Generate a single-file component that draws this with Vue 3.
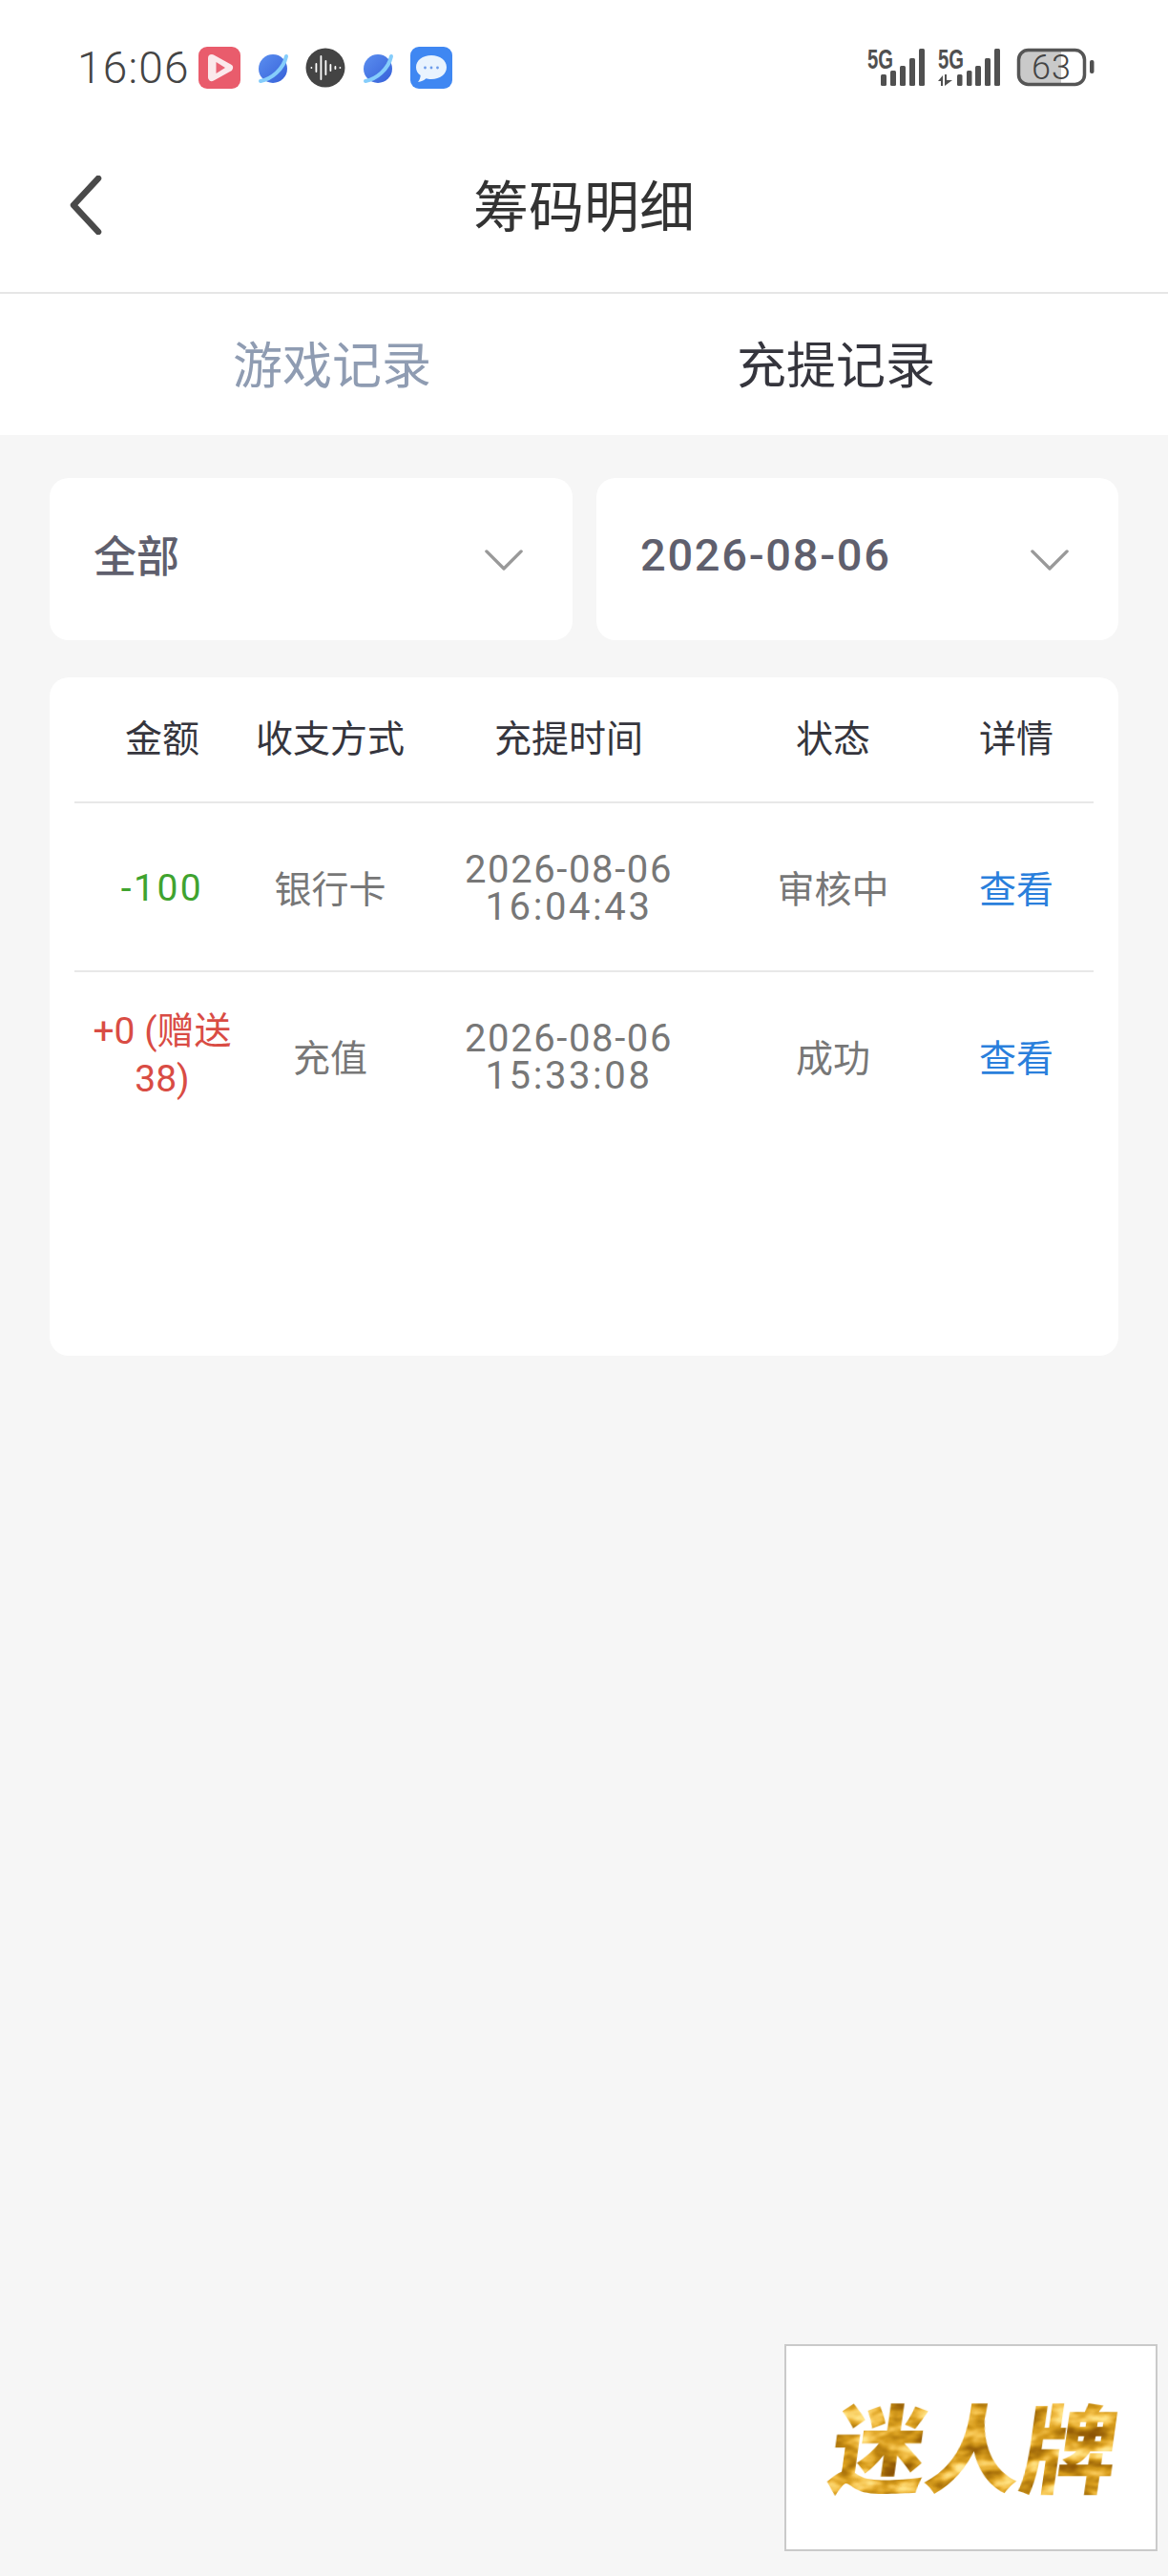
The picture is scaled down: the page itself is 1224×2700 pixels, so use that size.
<script setup>
const columns = ['金额', '收支方式', '充提时间', '状态', '详情']

const records = [
  { amount: '-100', type: 'out', method: '银行卡', date: '2026-08-06', time: '16:04:43', status: '审核中' },
  { amount: '+0 (赠送38)', type: 'in', method: '充值', date: '2026-08-06', time: '15:33:08', status: '成功' },
]

const waveBars = [1, 5, 13, 8, 4, 2, 1]
</script>

<template>
  <div class="page">
    <header class="top">
      <div class="status-bar">
        <div class="status-left">
          <span class="clock">16:06</span>
          <svg class="icon-app" viewBox="0 0 44 44">
            <rect width="44" height="44" rx="9" fill="#e95c6c" />
            <path d="M14 12 L32 22 L14 32Z" fill="#fbe9ec" stroke="#fbe9ec" stroke-width="8" stroke-linejoin="round" />
            <path d="M18.5 16 L28 22 L18.5 28Z" fill="#ea6274" />
          </svg>
          <svg class="icon-planet" viewBox="0 0 33 33">
            <defs>
              <linearGradient id="planetFill" x1="0" y1="0" x2="1" y2="1">
                <stop offset="0" stop-color="#5b8ff0" />
                <stop offset="1" stop-color="#3660d8" />
              </linearGradient>
            </defs>
            <circle cx="16" cy="17" r="15" fill="url(#planetFill)" />
            <path d="M3 30 C14 28 27 18 30 4" fill="none" stroke="#85cdfb" stroke-width="4" stroke-linecap="round" />
          </svg>
          <svg class="icon-wave" viewBox="0 0 42 42">
            <circle cx="21" cy="21" r="20.5" fill="#444" />
            <rect v-for="(h, i) in waveBars" :key="i" :x="5.5 + i * 5" :y="21 - h" width="1.8" :height="h * 2" rx="0.9" fill="#fff" />
          </svg>
          <svg class="icon-planet" viewBox="0 0 33 33">
            <circle cx="16" cy="17" r="15" fill="url(#planetFill)" />
            <path d="M3 30 C14 28 27 18 30 4" fill="none" stroke="#85cdfb" stroke-width="4" stroke-linecap="round" />
          </svg>
          <svg class="icon-app" viewBox="0 0 44 44">
            <rect width="44" height="44" rx="9" fill="#3f87f2" />
            <path d="M22 9 C31 9 38 14 38 21.5 C38 29 31 34 22 34 C19.5 34 18 33.7 16.5 33.2 C14 35.5 11.5 36.5 8 37 C9.5 35 10.5 33 10.7 30 C7.5 28 6 25 6 21.5 C6 14 13 9 22 9Z" fill="#e9f3fe" />
            <circle cx="15.5" cy="22" r="1.4" fill="#6c9bea" />
            <circle cx="22" cy="22" r="1.4" fill="#6c9bea" />
            <circle cx="28.5" cy="22" r="1.4" fill="#6c9bea" />
          </svg>
        </div>
        <svg class="signals" viewBox="0 0 238 42">
          <text x="0" y="22" class="net" textLength="27" lengthAdjust="spacingAndGlyphs">5G</text>
          <rect x="14" y="28" width="6" height="12" rx="1.5" />
          <rect x="24" y="24" width="6" height="16" rx="1.5" />
          <rect x="34" y="19" width="6" height="21" rx="1.5" />
          <rect x="44" y="11" width="6" height="29" rx="1.5" />
          <rect x="54" y="1" width="6" height="39" rx="1.5" />
          <text x="74" y="22" class="net" textLength="27" lengthAdjust="spacingAndGlyphs">5G</text>
          <path d="M74 35 L79 29 V40 H77 V35Z M81 28 H83 V34 L89 34 L81 40Z" />
          <rect x="94" y="28" width="5.5" height="12" rx="1.5" />
          <rect x="104" y="24" width="5.5" height="16" rx="1.5" />
          <rect x="113" y="19" width="6" height="21" rx="1.5" />
          <rect x="123" y="11" width="6" height="29" rx="1.5" />
          <rect x="133" y="1" width="6" height="39" rx="1.5" />
          <path d="M165 3 H203 V38 H165 Q159 38 159 32 V9 Q159 3 165 3Z" fill="#c9c9c9" />
          <rect x="158.5" y="2.5" width="69" height="36" rx="10" fill="none" stroke="#555" stroke-width="3.5" />
          <text x="193" y="33" class="level">63</text>
          <rect x="233" y="13" width="4.5" height="14" rx="2" />
        </svg>
      </div>

      <nav class="nav">
        <svg class="back" viewBox="0 0 34 62">
          <path d="M30 3 L4 31 L30 59" fill="none" stroke="#4a4a4a" stroke-width="6.5" stroke-linecap="round" stroke-linejoin="round" />
        </svg>
        <h1 class="title">筹码明细</h1>
      </nav>
    </header>

    <div class="tabs">
      <div class="tab">游戏记录</div>
      <div class="tab active">充提记录</div>
    </div>

    <main class="content">
      <div class="filters">
        <div class="filter">
          <span class="filter-text">全部</span>
          <svg class="arrow" viewBox="0 0 42 24">
            <path d="M2 3 L21 22 L40 3" fill="none" stroke="#999" stroke-width="3.5" stroke-linecap="round" stroke-linejoin="round" />
          </svg>
        </div>
        <div class="filter">
          <span class="filter-text filter-date">2026-08-06</span>
          <svg class="arrow" viewBox="0 0 42 24">
            <path d="M2 3 L21 22 L40 3" fill="none" stroke="#999" stroke-width="3.5" stroke-linecap="round" stroke-linejoin="round" />
          </svg>
        </div>
      </div>

      <section class="table">
        <div class="row head">
          <div v-for="col in columns" :key="col">{{ col }}</div>
        </div>
        <div v-for="item in records" :key="item.time" class="row">
          <div class="amount" :class="item.type">{{ item.amount }}</div>
          <div>{{ item.method }}</div>
          <div class="when">
            <div class="when-date">{{ item.date }}</div>
            <div class="when-time">{{ item.time }}</div>
          </div>
          <div>{{ item.status }}</div>
          <div class="link">查看</div>
        </div>
      </section>
    </main>

    <div class="brand">
      <svg class="brand-art" viewBox="0 0 340 120">
        <defs>
          <filter id="gold" x="0" y="0" width="100%" height="100%" color-interpolation-filters="sRGB">
            <feTurbulence type="fractalNoise" baseFrequency="0.03 0.055" numOctaves="3" seed="11" />
            <feColorMatrix values="1 0 0 0 0  1 0 0 0 0  1 0 0 0 0  0 0 0 0 1" />
            <feComponentTransfer>
              <feFuncR type="table" tableValues="0.55 0.55 0.6 0.72 0.85 0.96 1 1 1" />
              <feFuncG type="table" tableValues="0.33 0.33 0.38 0.5 0.62 0.76 0.88 0.93 0.93" />
              <feFuncB type="table" tableValues="0.02 0.02 0.03 0.06 0.12 0.3 0.5 0.65 0.65" />
            </feComponentTransfer>
            <feComposite in2="SourceAlpha" operator="in" />
          </filter>
        </defs>
        <text class="brand-text" x="169" y="99" transform="skewX(-8) translate(13 0)" filter="url(#gold)">迷人牌</text>
      </svg>
    </div>
  </div>
</template>

<style>
html, body {
  margin: 0;
  background: #f6f6f6;
}
</style>

<style scoped>
.page {
  position: relative;
  width: 1224px;
  height: 2700px;
  overflow: hidden;
  background: #f6f6f6;
  font-family: "Noto Sans CJK SC", Roboto, sans-serif;
}

.top {
  background: #fff;
  border-bottom: 2px solid #e6e6e6;
}

.status-bar {
  height: 124px;
  padding: 49px 77px 0 81px;
  box-sizing: border-box;
  display: flex;
  justify-content: space-between;
  align-items: flex-start;
}

.status-left {
  display: flex;
  align-items: center;
  gap: 17.5px;
  height: 44px;
}

.clock {
  font-family: Roboto, sans-serif;
  font-weight: 300;
  font-size: 46px;
  letter-spacing: 1.2px;
  color: #444;
  margin-right: -8px;
}

.icon-app {
  width: 44px;
  height: 44px;
}

.icon-planet {
  width: 33px;
  height: 33px;
}

.icon-wave {
  width: 42px;
  height: 42px;
}

.signals {
  width: 238px;
  height: 42px;
  margin-top: 1px;
  fill: #505050;
  overflow: visible;
}

.net {
  font-family: "Liberation Sans", sans-serif;
  font-weight: 700;
  font-size: 29px;
}

.level {
  font-family: Roboto, sans-serif;
  font-weight: 300;
  font-size: 36px;
  letter-spacing: 1px;
  fill: #444;
  text-anchor: middle;
}

.nav {
  height: 182px;
  padding-left: 73px;
  position: relative;
  display: flex;
  align-items: center;
}

.back {
  width: 34px;
  height: 62px;
}

.title {
  position: absolute;
  left: 0;
  right: 0;
  margin: 0;
  padding-bottom: 4px;
  text-align: center;
  font-size: 58px;
  font-weight: 400;
  color: #333;
}

.tabs {
  height: 148px;
  padding: 0 84px;
  background: #fff;
  display: grid;
  grid-template-columns: 1fr 1fr;
}

.tab {
  display: flex;
  justify-content: center;
  align-items: center;
  padding-bottom: 6px;
  font-size: 52px;
  color: #8f9cb2;
}

.tab.active {
  color: #35353d;
}

.content {
  padding: 45px 52px 0;
}

.filters {
  display: grid;
  grid-template-columns: 548px 547px;
  gap: 25px;
}

.filter {
  height: 170px;
  padding: 0 52px 0 46px;
  box-sizing: border-box;
  background: #fff;
  border-radius: 20px;
  display: flex;
  justify-content: space-between;
  align-items: center;
  font-size: 45px;
  font-weight: 500;
  color: #5f5f6d;
}

.filter-text {
  margin-bottom: 12px;
}

.filter-date {
  margin-bottom: 9px;
  font-family: Roboto, sans-serif;
  letter-spacing: 1.7px;
  font-size: 47px;
}

.arrow {
  width: 40px;
  height: 23px;
}

.table {
  margin-top: 39px;
  height: 711px;
  padding: 0 26px;
  box-sizing: border-box;
  background: #fff;
  border-radius: 20px;
}

.row {
  display: grid;
  grid-template-columns: 184px 168px 332px 222px 162px;
  align-items: center;
  text-align: center;
  height: 177px;
  box-sizing: border-box;
  border-bottom: 2px solid #e8e8e8;
  font-size: 39px;
  line-height: 1.15;
  color: #777;
}

.row:last-child {
  border-bottom: none;
  height: 175px;
}

.row.head {
  height: 132px;
  padding-bottom: 8px;
  color: #35353d;
}

.amount {
  padding: 0 16px;
  font-family: Roboto, "Noto Sans CJK SC", sans-serif;
  font-size: 39px;
  line-height: 1.28;
}

.amount.out {
  padding-top: 4px;
  color: #3fa32f;
  letter-spacing: 2.5px;
}

.amount.in {
  color: #d94c44;
}

.when {
  padding-top: 3px;
  font-family: Roboto, sans-serif;
  font-size: 40px;
  line-height: 39px;
}

.when-date {
  letter-spacing: 1.6px;
}

.when-time {
  letter-spacing: 2.6px;
}

.link {
  color: #2a7fdc;
}

.brand {
  position: absolute;
  left: 822px;
  top: 2457px;
  width: 391px;
  height: 217px;
  box-sizing: border-box;
  border: 2px solid #cacaca;
  background: #fff;
  display: flex;
  justify-content: center;
  align-items: center;
}

.brand-art {
  width: 340px;
  height: 120px;
  overflow: visible;
}

.brand-text {
  font-size: 100px;
  font-weight: 900;
  text-anchor: middle;
}
</style>
